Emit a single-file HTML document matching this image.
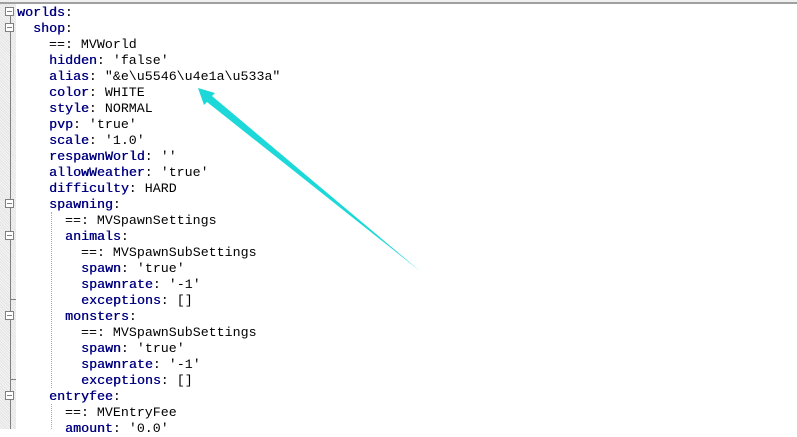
<!DOCTYPE html>
<html><head><style>
body{margin:0;width:797px;height:429px;overflow:hidden;background:#fff;position:relative;font-family:"Liberation Mono",monospace;font-size:13.3px}
.top{position:absolute;left:0;top:0;width:797px;height:2px;background:#f0f0f0;border-bottom:2px solid #a0a0a0}
.mg{position:absolute;left:0;top:4px;width:16px;height:425px;background:repeating-linear-gradient(45deg,#e4e4e4 0 1px,#f4f4f4 1px 2px)}
.vl{position:absolute;left:10px;top:16px;width:1px;height:413px;background:#808080}
.box{position:absolute;left:5px;width:9px;height:9px;border:1px solid #808080;background:#fff;box-sizing:border-box}
.box:after{content:"";position:absolute;left:1px;top:3px;width:5px;height:1px;background:#808080}
.tk{position:absolute;left:10px;width:6px;height:1px;background:#808080}
.l{position:absolute;height:16px;line-height:17px;white-space:pre;color:#000}
.k{color:#000080;text-shadow:0.4px 0 0 #000080}
.g{position:absolute;width:0;border-left:1px dotted #aaa}
</style></head><body>
<div class="top"></div>
<div class="mg"></div>
<div class="vl"></div>
<div class="box" style="top:7px"></div>
<div class="box" style="top:23px"></div>
<div class="box" style="top:199px"></div>
<div class="box" style="top:231px"></div>
<div class="box" style="top:311px"></div>
<div class="box" style="top:391px"></div>
<div class="tk" style="top:299px"></div>
<div class="tk" style="top:379px"></div>
<div class="g" style="left:51px;top:212px;height:176px"></div>
<div class="g" style="left:51px;top:404px;height:25px"></div>
<div class="l" style="left:17px;top:4px"><span class="k">worlds</span>:</div>
<div class="l" style="left:33px;top:20px"><span class="k">shop</span>:</div>
<div class="l" style="left:49px;top:36px">==: MVWorld</div>
<div class="l" style="left:49px;top:52px"><span class="k">hidden</span>: 'false'</div>
<div class="l" style="left:49px;top:68px"><span class="k">alias</span>: "&amp;e\u5546\u4e1a\u533a"</div>
<div class="l" style="left:49px;top:84px"><span class="k">color</span>: WHITE</div>
<div class="l" style="left:49px;top:100px"><span class="k">style</span>: NORMAL</div>
<div class="l" style="left:49px;top:116px"><span class="k">pvp</span>: 'true'</div>
<div class="l" style="left:49px;top:132px"><span class="k">scale</span>: '1.0'</div>
<div class="l" style="left:49px;top:148px"><span class="k">respawnWorld</span>: ''</div>
<div class="l" style="left:49px;top:164px"><span class="k">allowWeather</span>: 'true'</div>
<div class="l" style="left:49px;top:180px"><span class="k">difficulty</span>: HARD</div>
<div class="l" style="left:49px;top:196px"><span class="k">spawning</span>:</div>
<div class="l" style="left:65px;top:212px">==: MVSpawnSettings</div>
<div class="l" style="left:65px;top:228px"><span class="k">animals</span>:</div>
<div class="l" style="left:81px;top:244px">==: MVSpawnSubSettings</div>
<div class="l" style="left:81px;top:260px"><span class="k">spawn</span>: 'true'</div>
<div class="l" style="left:81px;top:276px"><span class="k">spawnrate</span>: '-1'</div>
<div class="l" style="left:81px;top:292px"><span class="k">exceptions</span>: []</div>
<div class="l" style="left:65px;top:308px"><span class="k">monsters</span>:</div>
<div class="l" style="left:81px;top:324px">==: MVSpawnSubSettings</div>
<div class="l" style="left:81px;top:340px"><span class="k">spawn</span>: 'true'</div>
<div class="l" style="left:81px;top:356px"><span class="k">spawnrate</span>: '-1'</div>
<div class="l" style="left:81px;top:372px"><span class="k">exceptions</span>: []</div>
<div class="l" style="left:49px;top:388px"><span class="k">entryfee</span>:</div>
<div class="l" style="left:65px;top:404px">==: MVEntryFee</div>
<div class="l" style="left:65px;top:420px"><span class="k">amount</span>: '0.0'</div>
<svg style="position:absolute;left:0;top:0" width="797" height="429">
<polygon points="198,88 215,93 212,96 420,271 207,102 204,105" fill="#1cd8d8"/>
</svg>
</body></html>
